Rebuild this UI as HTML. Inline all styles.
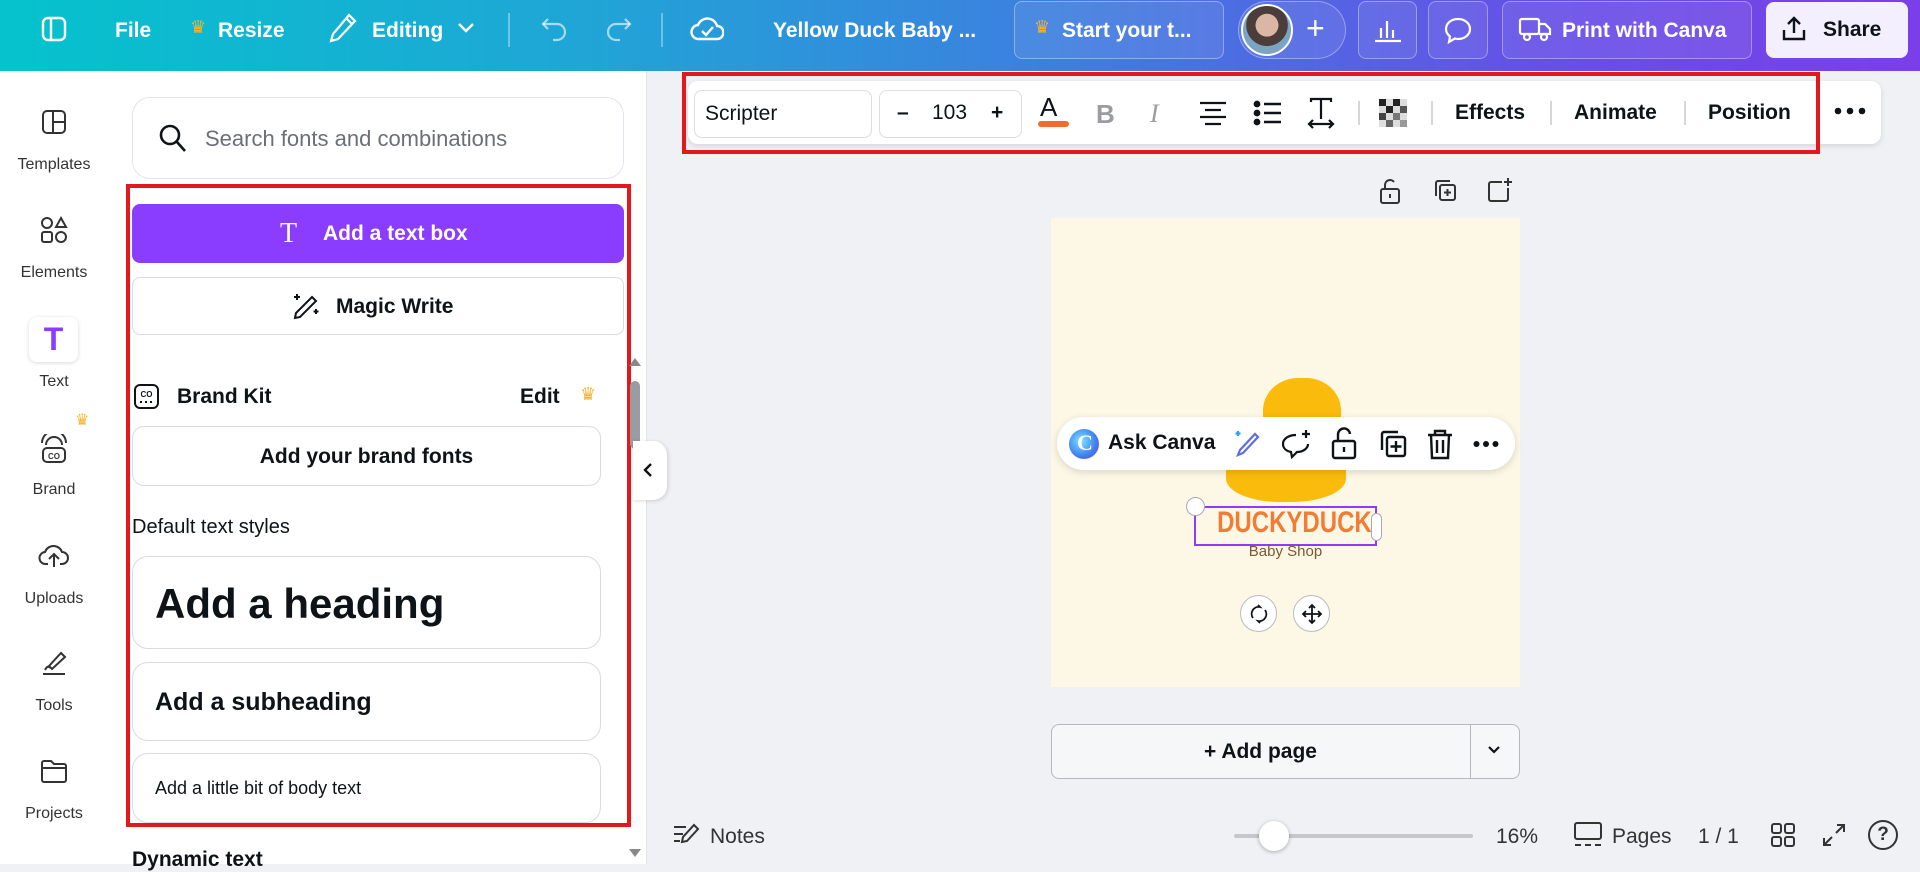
<!DOCTYPE html>
<html><head><meta charset="utf-8"><style>
*{box-sizing:border-box;margin:0;padding:0}
body{width:1920px;height:864px;overflow:hidden;background:#f0f1f5;font-family:"Liberation Sans",sans-serif;color:#0e1318;position:relative}
.a{position:absolute}
.top{left:0;top:0;width:1920px;height:71px;background:linear-gradient(90deg,#05c3cc 0%,#1fa6d6 30%,#3d7fdf 55%,#6550e6 80%,#7a3fe8 100%)}
.tw{color:#fff;font-weight:bold;font-size:21px;top:19px}
.tbox{border:1px solid rgba(255,255,255,.35);border-radius:8px;background:rgba(255,255,255,.08);height:58px;top:1px}
.rail{left:0;top:71px;width:108px;height:793px;background:#fff}
.rl{font-size:16px;color:#333;width:108px;text-align:center;left:0}
.panel{left:108px;top:71px;width:539px;height:793px;background:#fff;border-right:1px solid #e3e4e8}
.btn{border:1px solid #d9dbe0;border-radius:12px;background:#fff}
.red{border:4px solid #e2181b}
.tb{left:688px;top:81px;width:1193px;height:63px;background:#fff;border-radius:10px;box-shadow:0 2px 6px rgba(0,0,0,.12)}
.tt{font-size:21px;font-weight:bold;top:101px}
.dv{width:2px;height:24px;background:#d5d7dc;top:101px}
</style></head><body>
<div class="a top"></div>
<svg class="a" style="left:40px;top:15px" width="28" height="28" viewBox="0 0 28 28" fill="none" stroke="#fff" stroke-width="2.4"><rect x="3" y="3" width="22" height="22" rx="5"/><line x1="11" y1="3" x2="11" y2="25"/></svg>
<div class="a tw" style="left:115px">File</div>
<div class="a" style="left:190px;top:17px;color:#f7b32b;font-size:18px">♛</div>
<div class="a tw" style="left:218px">Resize</div>
<svg class="a" style="left:328px;top:12px" width="30" height="32" viewBox="0 0 30 32" fill="none" stroke="#fff" stroke-width="2.2"><path d="M21 3l6 6L10 27l-7 2 2-7z"/><path d="M18 6l6 6"/></svg>
<div class="a tw" style="left:372px">Editing</div>
<svg class="a" style="left:456px;top:21px" width="20" height="14" viewBox="0 0 20 14" fill="none" stroke="#fff" stroke-width="2.4"><path d="M3 3l7 7 7-7"/></svg>
<div class="a" style="left:508px;top:13px;width:2px;height:34px;background:rgba(255,255,255,.35)"></div>
<svg class="a" style="left:540px;top:14px" width="30" height="30" viewBox="0 0 30 30" fill="none" stroke="rgba(255,255,255,.6)" stroke-width="2.2"><path d="M8 5L3 10l5 5"/><path d="M3 10h14a8 8 0 010 16h-4"/></svg>
<svg class="a" style="left:603px;top:14px" width="30" height="30" viewBox="0 0 30 30" fill="none" stroke="rgba(255,255,255,.6)" stroke-width="2.2"><path d="M22 5l5 5-5 5"/><path d="M27 10H13a8 8 0 000 16h4"/></svg>
<div class="a" style="left:661px;top:13px;width:2px;height:34px;background:rgba(255,255,255,.35)"></div>
<svg class="a" style="left:690px;top:12px" width="34" height="32" viewBox="0 0 34 32" fill="none" stroke="#fff" stroke-width="2.4"><path d="M9 27a7 7 0 01-1-14 10 10 0 0119 1 6.5 6.5 0 010 13z"/><path d="M12 19l4 4 7-8"/></svg>
<div class="a tw" style="left:773px">Yellow Duck Baby ...</div>
<div class="a tbox" style="left:1014px;width:210px"></div>
<div class="a" style="left:1034px;top:17px;color:#f7b32b;font-size:18px">♛</div>
<div class="a tw" style="left:1062px">Start your t...</div>
<div class="a tbox" style="left:1238px;width:108px;border-radius:30px"></div>
<div class="a" style="left:1241px;top:4px;width:52px;height:52px;border-radius:50%;background:radial-gradient(circle at 50% 40%,#d9b7a4 0 30%,#4b3d3a 31% 55%,#7aa3c4 56%);border:2px solid #fff"></div>
<div class="a" style="left:1306px;top:12px;color:#fff;font-size:32px;line-height:32px">+</div>
<div class="a tbox" style="left:1358px;width:59px"></div>
<svg class="a" style="left:1373px;top:16px" width="30" height="28" viewBox="0 0 30 28" fill="none" stroke="#fff" stroke-width="2.2"><path d="M2 25h26M8 22V12M14 22V5M20 22V14"/></svg>
<div class="a tbox" style="left:1428px;width:60px"></div>
<svg class="a" style="left:1443px;top:15px" width="30" height="30" viewBox="0 0 30 30" fill="none" stroke="#fff" stroke-width="2.2"><path d="M15 4C8 4 3 8.5 3 14c0 3 1.5 5.5 4 7.5L6 27l6-3.5c1 .3 2 .5 3 .5 7 0 12-4.5 12-10S22 4 15 4z"/></svg>
<div class="a tbox" style="left:1502px;width:250px"></div>
<svg class="a" style="left:1518px;top:16px" width="34" height="26" viewBox="0 0 34 26" fill="none" stroke="#fff" stroke-width="2.2"><rect x="2" y="3" width="19" height="15" rx="2"/><path d="M21 8h6l5 5v5H21"/><circle cx="9" cy="21" r="3"/><circle cx="26" cy="21" r="3"/></svg>
<div class="a tw" style="left:1562px">Print with Canva</div>
<div class="a" style="left:1766px;top:2px;width:142px;height:56px;background:#f3efff;border-radius:8px"></div>
<svg class="a" style="left:1779px;top:14px" width="30" height="30" viewBox="0 0 30 30" fill="none" stroke="#0e1318" stroke-width="2.4"><path d="M15 19V4M9 10l6-6 6 6"/><path d="M5 16v9h20v-9"/></svg>
<div class="a" style="left:1823px;top:18px;font-size:21px;font-weight:bold">Share</div>

<div class="a rail"></div>
<svg class="a" style="left:40px;top:108px" width="28" height="28" viewBox="0 0 28 28" fill="none" stroke="#333" stroke-width="2"><rect x="3" y="3" width="22" height="22" rx="4"/><path d="M13 3v22M13 14h12"/></svg>
<div class="a rl" style="top:156px">Templates</div>
<svg class="a" style="left:39px;top:215px" width="30" height="30" viewBox="0 0 30 30" fill="none" stroke="#333" stroke-width="2"><circle cx="8" cy="8" r="5"/><path d="M22 3l5 9H17z"/><rect x="3" y="17" width="10" height="10" rx="2"/><rect x="17" y="17" width="10" height="10" rx="5"/></svg>
<div class="a rl" style="top:264px">Elements</div>
<div class="a" style="left:29px;top:317px;width:49px;height:45px;background:#fff;border-radius:8px;box-shadow:0 1px 4px rgba(0,0,0,.15)"></div>
<div class="a" style="left:29px;top:320px;width:49px;text-align:center;font-size:32px;font-weight:bold;color:#8b3dff;line-height:38px">T</div>
<div class="a rl" style="top:373px">Text</div>
<div class="a" style="left:75px;top:410px;color:#f7b32b;font-size:16px">♛</div>
<svg class="a" style="left:38px;top:434px" width="32" height="32" viewBox="0 0 32 32" fill="none" stroke="#333" stroke-width="2"><rect x="5" y="14" width="22" height="14" rx="4"/><path d="M8 11a8 8 0 0116 0M4 9a12 12 0 0124 0"/><text x="16" y="25" font-size="8" text-anchor="middle" fill="#333" stroke="none" font-family="Liberation Sans" font-weight="bold">CO</text></svg>
<div class="a rl" style="top:481px">Brand</div>
<svg class="a" style="left:38px;top:540px" width="32" height="30" viewBox="0 0 32 30" fill="none" stroke="#333" stroke-width="2"><path d="M10 24H8a6 6 0 01-1-12 9 9 0 0117 0 6 6 0 010 12h-2"/><path d="M16 27V15M11 19l5-5 5 5"/></svg>
<div class="a rl" style="top:590px">Uploads</div>
<svg class="a" style="left:39px;top:648px" width="30" height="30" viewBox="0 0 30 30" fill="none" stroke="#333" stroke-width="2"><path d="M10 18l12-13 4 4-13 12z"/><path d="M4 26h22"/><path d="M6 22c2-4 4-4 5-2"/></svg>
<div class="a rl" style="top:697px">Tools</div>
<svg class="a" style="left:39px;top:757px" width="30" height="28" viewBox="0 0 30 28" fill="none" stroke="#333" stroke-width="2"><path d="M3 6a2 2 0 012-2h7l3 3h10a2 2 0 012 2v14a2 2 0 01-2 2H5a2 2 0 01-2-2z"/><path d="M3 11h24"/></svg>
<div class="a rl" style="top:805px">Projects</div>

<div class="a panel"></div>
<div class="a" style="left:132px;top:97px;width:492px;height:82px;border:1px solid #e6e1f7;border-radius:18px;background:#fff"></div>
<svg class="a" style="left:158px;top:123px" width="30" height="32" viewBox="0 0 30 32" fill="none" stroke="#0e1318" stroke-width="2.6"><circle cx="12" cy="12" r="9"/><path d="M19 19l8 9"/></svg>
<div class="a" style="left:205px;top:126px;font-size:22px;color:#6b6f76">Search fonts and combinations</div>
<div class="a red" style="left:126px;top:184px;width:505px;height:643px"></div>
<div class="a" style="left:132px;top:204px;width:492px;height:59px;background:#8b3dff;border-radius:8px"></div>
<div class="a" style="left:280px;top:218px;color:#fff;font-size:28px;font-family:'Liberation Serif',serif">T</div>
<div class="a" style="left:323px;top:222px;color:#fff;font-size:21px;font-weight:bold">Add a text box</div>
<div class="a btn" style="left:132px;top:277px;width:492px;height:58px;border-radius:8px"></div>
<svg class="a" style="left:290px;top:291px" width="32" height="30" viewBox="0 0 32 30" fill="none" stroke="#0e1318" stroke-width="2"><path d="M22 6l4 4-16 16-5 1 1-5z"/><path d="M7 3v6M4 6h6M26 18v5M23.5 20.5h5"/></svg>
<div class="a" style="left:336px;top:295px;font-size:21px;font-weight:bold">Magic Write</div>
<svg class="a" style="left:133px;top:383px" width="27" height="27" viewBox="0 0 27 27" fill="none" stroke="#0e1318" stroke-width="2"><rect x="2" y="2" width="23" height="23" rx="5"/><text x="13.5" y="14" font-size="8" text-anchor="middle" fill="#0e1318" stroke="none" font-weight="bold" font-family="Liberation Sans">CO</text><path d="M7 19h2M12 19h2M17 19h2"/></svg>
<div class="a" style="left:177px;top:385px;font-size:21px;font-weight:bold">Brand Kit</div>
<div class="a" style="left:520px;top:385px;font-size:21px;font-weight:bold">Edit</div>
<div class="a" style="left:580px;top:384px;color:#f7b32b;font-size:18px">♛</div>
<div class="a btn" style="left:132px;top:426px;width:469px;height:60px"></div>
<div class="a" style="left:132px;top:445px;width:469px;text-align:center;font-size:21px;font-weight:bold">Add your brand fonts</div>
<div class="a" style="left:132px;top:516px;font-size:20px">Default text styles</div>
<div class="a btn" style="left:132px;top:556px;width:469px;height:93px;border-radius:16px"></div>
<div class="a" style="left:155px;top:580px;font-size:42px;font-weight:bold">Add a heading</div>
<div class="a btn" style="left:132px;top:662px;width:469px;height:79px;border-radius:16px"></div>
<div class="a" style="left:155px;top:688px;font-size:25px;font-weight:bold">Add a subheading</div>
<div class="a btn" style="left:132px;top:753px;width:469px;height:70px;border-radius:16px"></div>
<div class="a" style="left:155px;top:778px;font-size:18px">Add a little bit of body text</div>
<div class="a" style="left:132px;top:848px;font-size:21px;font-weight:bold">Dynamic text</div>
<div class="a" style="left:629px;top:358px;width:0;height:0;border:6px solid transparent;border-bottom:8px solid #888;border-top:none"></div>
<div class="a" style="left:630px;top:381px;width:10px;height:68px;background:#9a9ca1;border-radius:5px"></div>
<div class="a" style="left:629px;top:849px;width:0;height:0;border:6px solid transparent;border-top:8px solid #888;border-bottom:none"></div>
<div class="a" style="left:633px;top:441px;width:34px;height:59px;background:#fff;border-radius:0 14px 14px 0;box-shadow:1px 1px 4px rgba(0,0,0,.15)"></div>
<svg class="a" style="left:641px;top:461px" width="14" height="18" viewBox="0 0 14 18" fill="none" stroke="#0e1318" stroke-width="2.4"><path d="M10 3L4 9l6 6"/></svg>

<div class="a tb"></div>
<div class="a red" style="left:682px;top:72px;width:1138px;height:82px"></div>
<div class="a" style="left:694px;top:90px;width:178px;height:48px;border:1px solid #dcdde1;border-radius:8px"></div>
<div class="a" style="left:705px;top:102px;font-size:21px">Scripter</div>
<div class="a" style="left:879px;top:90px;width:143px;height:48px;border:1px solid #dcdde1;border-radius:8px"></div>
<div class="a tt" style="left:897px">–</div>
<div class="a" style="left:932px;top:101px;font-size:21px">103</div>
<div class="a tt" style="left:991px">+</div>
<div class="a" style="left:1040px;top:94px;font-size:26px;line-height:26px">A</div>
<div class="a" style="left:1038px;top:121px;width:31px;height:6px;background:#f26b2f;border-radius:3px"></div>
<div class="a" style="left:1096px;top:99px;font-size:26px;font-weight:bold;color:#9a9ca1">B</div>
<div class="a" style="left:1150px;top:99px;font-size:26px;font-style:italic;font-family:'Liberation Serif',serif;color:#9a9ca1">I</div>
<svg class="a" style="left:1198px;top:100px" width="30" height="26" viewBox="0 0 30 26" stroke="#0e1318" stroke-width="2.2"><path d="M2 3h26M7 10h16M2 17h26M7 24h16"/></svg>
<svg class="a" style="left:1253px;top:100px" width="30" height="26" viewBox="0 0 30 26" stroke="#0e1318" stroke-width="2.4"><circle cx="4" cy="4" r="2.2" fill="#0e1318"/><circle cx="4" cy="13" r="2.2" fill="#0e1318"/><circle cx="4" cy="22" r="2.2" fill="#0e1318"/><path d="M11 4h17M11 13h17M11 22h17"/></svg>
<svg class="a" style="left:1306px;top:96px" width="30" height="34" viewBox="0 0 30 34" fill="none" stroke="#0e1318" stroke-width="2.2"><path d="M5 6V3h20v3M15 3v20M3 28h24M7 24l-4 4 4 4M23 24l4 4-4 4"/></svg>
<div class="a dv" style="left:1358px"></div>
<svg class="a" style="left:1379px;top:99px" width="28" height="28" viewBox="0 0 4 4"><rect width="4" height="4" fill="#ddd"/><rect x="0" y="0" width="1" height="1" fill="#222"/><rect x="2" y="0" width="1" height="1" fill="#222"/><rect x="1" y="1" width="1" height="1" fill="#222"/><rect x="3" y="1" width="1" height="1" fill="#555"/><rect x="0" y="2" width="1" height="1" fill="#444"/><rect x="2" y="2" width="1" height="1" fill="#777"/><rect x="1" y="3" width="1" height="1" fill="#666"/><rect x="3" y="3" width="1" height="1" fill="#999"/></svg>
<div class="a dv" style="left:1431px"></div>
<div class="a tt" style="left:1455px">Effects</div>
<div class="a dv" style="left:1550px"></div>
<div class="a tt" style="left:1574px">Animate</div>
<div class="a dv" style="left:1684px"></div>
<div class="a tt" style="left:1708px">Position</div>
<svg class="a" style="left:1834px;top:106px" width="32" height="10" viewBox="0 0 32 10" fill="#0e1318"><circle cx="4" cy="5" r="3.3"/><circle cx="16" cy="5" r="3.3"/><circle cx="28" cy="5" r="3.3"/></svg>

<svg class="a" style="left:1378px;top:177px" width="24" height="28" viewBox="0 0 24 28" fill="none" stroke="#333" stroke-width="2"><rect x="3" y="12" width="18" height="14" rx="2"/><path d="M7 12V8a5 5 0 019-3"/><path d="M12 17v4"/></svg>
<svg class="a" style="left:1432px;top:178px" width="26" height="26" viewBox="0 0 26 26" fill="none" stroke="#333" stroke-width="2"><path d="M4 18V5a2 2 0 012-2h12"/><rect x="8" y="7" width="15" height="15" rx="2"/><path d="M15.5 11v7M12 14.5h7"/></svg>
<svg class="a" style="left:1486px;top:176px" width="28" height="28" viewBox="0 0 28 28" fill="none" stroke="#333" stroke-width="2"><path d="M16 6H5a2 2 0 00-2 2v15a2 2 0 002 2h15a2 2 0 002-2V12"/><path d="M22 2v8M18 6h8"/></svg>

<div class="a" style="left:1051px;top:218px;width:469px;height:469px;background:#fdf8e5"></div>
<div class="a" style="left:1263px;top:378px;width:78px;height:72px;background:#fbbb0c;border-radius:45% 45% 30% 30%"></div>
<div class="a" style="left:1226px;top:450px;width:120px;height:52px;background:#fbbb0c;border-radius:20% 20% 45% 45%"></div>
<div class="a" style="left:1057px;top:417px;width:458px;height:53px;background:#fff;border-radius:27px;box-shadow:0 2px 8px rgba(0,0,0,.15)"></div>
<div class="a" style="left:1069px;top:429px;width:30px;height:30px;border-radius:50%;background:radial-gradient(circle at 40% 40%,#7ce7ff,#3f7df0 60%,#7b3ff0)"></div>
<div class="a" style="left:1077px;top:430px;color:#fff;font-size:22px;font-weight:bold;font-family:'Liberation Serif',serif">C</div>
<div class="a" style="left:1108px;top:431px;font-size:21px;font-weight:bold">Ask Canva</div>
<svg class="a" style="left:1231px;top:428px" width="32" height="32" viewBox="0 0 32 32" fill="none" stroke="#5b6de8" stroke-width="2.2"><path d="M24 6l3 3-15 16-5 2 2-5z"/><path d="M7 3v5M4.5 5.5h5" stroke="#2fa3e8"/></svg>
<svg class="a" style="left:1280px;top:428px" width="32" height="32" viewBox="0 0 32 32" fill="none" stroke="#0e1318" stroke-width="2.2"><path d="M16 7C9 7 3 10.5 3 16c0 4 3 7 8 8l1 5 5-5c6 0 11-3.5 11-8"/><path d="M26 2v8M22 6h8"/></svg>
<svg class="a" style="left:1331px;top:426px" width="26" height="34" viewBox="0 0 26 34" fill="none" stroke="#0e1318" stroke-width="2.4"><rect x="2" y="15" width="22" height="17" rx="2"/><path d="M7 15V9a6 6 0 0112-1"/><path d="M13 21v5"/></svg>
<svg class="a" style="left:1378px;top:429px" width="30" height="30" viewBox="0 0 30 30" fill="none" stroke="#0e1318" stroke-width="2.4"><path d="M4 21V5a2 2 0 012-2h14"/><rect x="9" y="8" width="18" height="19" rx="2"/><path d="M18 12v11M12.5 17.5h11"/></svg>
<svg class="a" style="left:1426px;top:428px" width="28" height="32" viewBox="0 0 28 32" fill="none" stroke="#0e1318" stroke-width="2.4"><path d="M2 7h24M9 7V3h10v4M5 7l1 23h16l1-23M11 12v13M17 12v13"/></svg>
<svg class="a" style="left:1473px;top:439px" width="26" height="10" viewBox="0 0 26 10" fill="#0e1318"><circle cx="3.5" cy="5" r="3"/><circle cx="13" cy="5" r="3"/><circle cx="22.5" cy="5" r="3"/></svg>
<div class="a" style="left:1194px;top:506px;width:183px;height:40px;border:2.5px solid #8b3dff"></div>
<div class="a" style="left:1186px;top:497px;width:19px;height:19px;border-radius:50%;background:#fff;border:1px solid #aaa"></div>
<div class="a" style="left:1200px;top:506px;width:171px;text-align:center;font-size:30px;font-weight:bold;color:#f27b35;white-space:nowrap;transform:scaleX(.8);transform-origin:center">DUCKYDUCK</div>
<div class="a" style="left:1371px;top:513px;width:11px;height:28px;border-radius:6px;background:#fff;border:1px solid #aaa"></div>
<div class="a" style="left:1194px;top:543px;width:183px;text-align:center;font-size:15px;color:#7a5a2c">Baby Shop</div>
<div class="a" style="left:1240px;top:595px;width:37px;height:37px;border-radius:50%;background:#fff;border:1px solid #bbb"></div>
<svg class="a" style="left:1249px;top:604px" width="20" height="20" viewBox="0 0 20 20" fill="none" stroke="#0e1318" stroke-width="1.8"><path d="M4 14a7 7 0 017-11l-2-2M16 6a7 7 0 01-7 11l2 2"/></svg>
<div class="a" style="left:1293px;top:595px;width:37px;height:37px;border-radius:50%;background:#fff;border:1px solid #bbb"></div>
<svg class="a" style="left:1301px;top:603px" width="22" height="22" viewBox="0 0 22 22" fill="none" stroke="#0e1318" stroke-width="1.8"><path d="M11 2v18M2 11h18M8 5l3-3 3 3M8 17l3 3 3-3M5 8l-3 3 3 3M17 8l3 3-3 3"/></svg>

<div class="a" style="left:1051px;top:724px;width:469px;height:55px;border:1px solid #b5b8be;border-radius:8px;background:#f6f7f9"></div>
<div class="a" style="left:1470px;top:724px;width:1px;height:55px;background:#b5b8be"></div>
<div class="a" style="left:1051px;top:740px;width:419px;text-align:center;font-size:21px;font-weight:bold">+ Add page</div>
<svg class="a" style="left:1486px;top:744px" width="16" height="12" viewBox="0 0 16 12" fill="none" stroke="#0e1318" stroke-width="2.2"><path d="M3 3l5 5 5-5"/></svg>

<svg class="a" style="left:672px;top:822px" width="28" height="26" viewBox="0 0 28 26" fill="none" stroke="#333" stroke-width="2"><path d="M2 5h12M2 12h9M2 19h6"/><path d="M22 3l4 4-11 12-5 1 1-5z"/></svg>
<div class="a" style="left:710px;top:825px;font-size:21px;color:#333">Notes</div>
<div class="a" style="left:1234px;top:834px;width:239px;height:4px;background:#c5c7cc;border-radius:2px"></div>
<div class="a" style="left:1259px;top:821px;width:30px;height:30px;border-radius:50%;background:#fff;box-shadow:0 1px 4px rgba(0,0,0,.3)"></div>
<div class="a" style="left:1496px;top:825px;font-size:21px;color:#333">16%</div>
<svg class="a" style="left:1573px;top:821px" width="30" height="28" viewBox="0 0 30 28" fill="none" stroke="#333" stroke-width="2"><rect x="2" y="2" width="26" height="16" rx="2"/><path d="M2 24h6M12 24h6M22 24h6"/></svg>
<div class="a" style="left:1612px;top:825px;font-size:21px;color:#333">Pages</div>
<div class="a" style="left:1698px;top:825px;font-size:21px;color:#333">1 / 1</div>
<svg class="a" style="left:1770px;top:822px" width="26" height="26" viewBox="0 0 26 26" fill="none" stroke="#333" stroke-width="2"><rect x="2" y="2" width="9" height="9" rx="2"/><rect x="15" y="2" width="9" height="9" rx="2"/><rect x="2" y="15" width="9" height="9" rx="2"/><rect x="15" y="15" width="9" height="9" rx="2"/></svg>
<svg class="a" style="left:1821px;top:822px" width="26" height="26" viewBox="0 0 26 26" fill="none" stroke="#333" stroke-width="2"><path d="M16 3h7v7M23 3l-8 8M10 23H3v-7M3 23l8-8"/></svg>
<div class="a" style="left:1868px;top:820px;width:30px;height:30px;border:2px solid #333;border-radius:50%;text-align:center;font-size:19px;font-weight:bold;line-height:26px;color:#333">?</div>
</body></html>
